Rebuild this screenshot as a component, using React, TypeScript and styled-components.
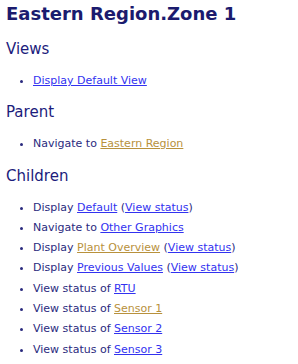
import React from "react";
import styled, { createGlobalStyle } from "styled-components";

interface Item {
  prefix: string;
  link: string;
  visited?: boolean;
  status?: boolean;
}

interface Section {
  title: string;
  items: Item[];
}

const sections: Section[] = [
  {
    title: "Views",
    items: [{ prefix: "", link: "Display Default View" }],
  },
  {
    title: "Parent",
    items: [{ prefix: "Navigate to ", link: "Eastern Region", visited: true }],
  },
  {
    title: "Children",
    items: [
      { prefix: "Display ", link: "Default", status: true },
      { prefix: "Navigate to ", link: "Other Graphics" },
      { prefix: "Display ", link: "Plant Overview", visited: true, status: true },
      { prefix: "Display ", link: "Previous Values", status: true },
      { prefix: "View status of ", link: "RTU" },
      { prefix: "View status of ", link: "Sensor 1", visited: true },
      { prefix: "View status of ", link: "Sensor 2" },
      { prefix: "View status of ", link: "Sensor 3" },
    ],
  },
];

const GlobalStyle = createGlobalStyle`
  body {
    margin: 0;
    background: #ffffff;
    font-family: "DejaVu Sans", Verdana, sans-serif;
  }
`;

const Page = styled.div`
  padding: 3px 6px 0 6px;
  color: #20207a;
`;

const Title = styled.h1`
  margin: 0 0 14px 0;
  font-size: 18px;
  line-height: 22px;
  font-weight: bold;
  color: #1b1b6e;
`;

const Heading = styled.h2`
  margin: 0;
  font-size: 15px;
  line-height: 20px;
  font-weight: normal;
  color: #1c1c7c;
`;

const List = styled.ul`
  margin: 12px 0 11px 0;
  padding-left: 27px;
  list-style: disc;
  font-size: 11px;
`;

const Row = styled.li`
  line-height: 20.3px;
  color: #2a2a7e;
`;

const Anchor = styled.a<{ $visited?: boolean }>`
  color: ${(p) => (p.$visited ? "#b8913c" : "#3232f0")};
  text-decoration: underline;
`;

const App = () => {
  return (
    <Page>
      <GlobalStyle />
      <Title>Eastern Region.Zone 1</Title>
      {sections.map((s) => (
        <div key={s.title}>
          <Heading>{s.title}</Heading>
          <List>
            {s.items.map((it, i) => (
              <Row key={i}>
                {it.prefix}
                <Anchor href="#" $visited={it.visited}>
                  {it.link}
                </Anchor>
                {it.status && (
                  <>
                    {" ("}
                    <Anchor href="#">View status</Anchor>
                    {")"}
                  </>
                )}
              </Row>
            ))}
          </List>
        </div>
      ))}
    </Page>
  );
};

export default App;
